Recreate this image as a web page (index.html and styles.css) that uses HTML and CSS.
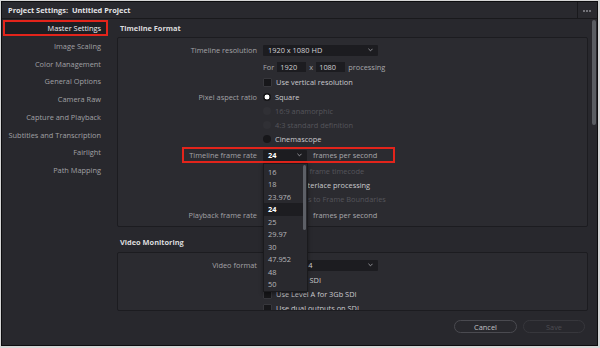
FILE: index.html
```html
<!DOCTYPE html>
<html>
<head>
<meta charset="utf-8">
<link rel="stylesheet" href="styles.css">
</head>
<body>
<div class="window">
  <div class="titlebar">
    <span class="title">Project Settings:&nbsp; Untitled Project</span>
    <div class="more"><span class="dot"></span><span class="dot"></span><span class="dot"></span></div>
  </div>
  <div class="body">
    <nav class="sidebar">
      <div class="nav-item active">Master Settings</div>
      <div class="nav-item">Image Scaling</div>
      <div class="nav-item">Color Management</div>
      <div class="nav-item">General Options</div>
      <div class="nav-item">Camera Raw</div>
      <div class="nav-item">Capture and Playback</div>
      <div class="nav-item">Subtitles and Transcription</div>
      <div class="nav-item">Fairlight</div>
      <div class="nav-item">Path Mapping</div>
    </nav>
    <main class="content">
      <section class="section">
        <h2 class="heading">Timeline Format</h2>
        <div class="box box1">
          <div class="row">
            <span class="label">Timeline resolution</span>
            <div class="select wide"><span>1920 x 1080 HD</span><svg class="chev" viewBox="0 0 6 4"><polyline points="0.5,0.5 3,3 5.5,0.5"/></svg></div>
          </div>
          <div class="row mt3">
            <span class="label"></span>
            <span class="txt">For</span>
            <span class="input">1920</span>
            <span class="txt">x</span>
            <span class="input">1080</span>
            <span class="txt">processing</span>
          </div>
          <div class="row mt1">
            <span class="label"></span>
            <span class="check"></span><span class="val">Use vertical resolution</span>
          </div>
          <div class="row mt1">
            <span class="label">Pixel aspect ratio</span>
            <span class="radio on"></span><span class="val">Square</span>
          </div>
          <div class="row">
            <span class="label"></span>
            <span class="radio dim"></span><span class="val off">16:9 anamorphic</span>
          </div>
          <div class="row">
            <span class="label"></span>
            <span class="radio dim"></span><span class="val off">4:3 standard definition</span>
          </div>
          <div class="row">
            <span class="label"></span>
            <span class="radio"></span><span class="val">Cinemascope</span>
          </div>
          <div class="row mt2 marked">
            <span class="label">Timeline frame rate</span>
            <div class="fps-wrap">
              <div class="select fps"><b>24</b><svg class="chev" viewBox="0 0 6 4"><polyline points="0.5,0.5 3,3 5.5,0.5"/></svg></div>
              <ul class="menu">
                <li>16</li>
                <li>18</li>
                <li>23.976</li>
                <li class="sel">24</li>
                <li>25</li>
                <li>29.97</li>
                <li>30</li>
                <li>47.952</li>
                <li>48</li>
                <li>50</li>
                <span class="menu-thumb"></span>
              </ul>
            </div>
            <span class="txt">frames per second</span>
            <span class="mark"></span>
          </div>
          <div class="row mt2">
            <span class="label"></span>
            <span class="check"></span><span class="val off">Use drop frame timecode</span>
          </div>
          <div class="row">
            <span class="label"></span>
            <span class="check"></span><span class="val">Enable interlace processing</span>
          </div>
          <div class="row">
            <span class="label"></span>
            <span class="check"></span><span class="val off">Snap Clips to Frame Boundaries</span>
          </div>
          <div class="row mt2">
            <span class="label">Playback frame rate</span>
            <div class="select fps"><span>24</span><svg class="chev" viewBox="0 0 6 4"><polyline points="0.5,0.5 3,3 5.5,0.5"/></svg></div>
            <span class="txt">frames per second</span>
          </div>
        </div>
      </section>
      <section class="section sec2">
        <h2 class="heading h2b">Video Monitoring</h2>
        <div class="box box2">
          <div class="row">
            <span class="label">Video format</span>
            <div class="select wide"><span>HD 1080p 24</span><svg class="chev" viewBox="0 0 6 4"><polyline points="0.5,0.5 3,3 5.5,0.5"/></svg></div>
          </div>
          <div class="row mt1">
            <span class="label"></span>
            <span class="check"></span><span class="val">Use 4:4:4 SDI</span>
          </div>
          <div class="row">
            <span class="label"></span>
            <span class="check"></span><span class="val">Use Level A for 3Gb SDI</span>
          </div>
          <div class="row">
            <span class="label"></span>
            <span class="check"></span><span class="val">Use dual outputs on SDI</span>
          </div>
        </div>
      </section>
      <div class="footer">
        <button class="btn">Cancel</button>
        <button class="btn disabled">Save</button>
      </div>
    </main>
    <div class="vscroll"><div class="vthumb"></div></div>
  </div>
</div>
</body>
</html>
```
FILE: styles.css
```css
* { box-sizing: border-box; }
html, body { margin: 0; padding: 0; }
body {
  background: #d6d6d6;
  width: 600px;
  height: 348px;
  font-family: "Open Sans", "Noto Sans", sans-serif;
  font-size: 7.4px;
  color: #a4a4a8;
}
.window {
  margin: 1px 0 0 1px;
  width: 597px;
  height: 345px;
  border: 1px solid #0d0d0f;
  background: #28282d;
  display: flex;
  flex-direction: column;
}
.titlebar {
  height: 17px;
  flex: none;
  display: flex;
  align-items: center;
  justify-content: space-between;
  background: #29292e;
  border-bottom: 1px solid #19191c;
  padding-left: 6px;
}
.title {
  font-weight: 700;
  color: #e4e4e6;
  font-size: 7.4px;
}
.more {
  width: 19px;
  height: 16px;
  align-self: stretch;
  margin: 0 1px 0 0;
  border-left: 1px solid #19191c;
  display: flex;
  align-items: center;
  justify-content: center;
  gap: 1.5px;
  padding-top: 2px;
}
.dot { width: 1.8px; height: 1.8px; background: #8a8a90; border-radius: 50%; }
.body {
  flex: 1;
  display: flex;
  min-height: 0;
}
.sidebar {
  width: 115px;
  flex: none;
  padding-top: 1px;
  padding-left: 1px;
  display: flex;
  flex-direction: column;
  gap: 1.75px;
}
.nav-item {
  width: 105px;
  height: 16px;
  line-height: 16px;
  text-align: right;
  padding-right: 7px;
  color: #a0a0a4;
  white-space: nowrap;
}
.nav-item.active {
  border: 2px solid #e3241b;
  background: #1e1e22;
  color: #f0f0f2;
  line-height: 12px;
  padding-right: 5px;
}
.content {
  width: 471px;
  flex: none;
  display: flex;
  flex-direction: column;
}
.heading {
  margin: 0;
  height: 18px;
  line-height: 18px;
  padding-left: 3px;
  font-size: 7.4px;
  font-weight: 700;
  color: #dcdcde;
}
.sec2 { margin-top: 6px; }
.h2b { height: 19px; line-height: 19px; }
.box {
  border: 1px solid #1c1c20;
  border-radius: 2px;
  background: #2b2b30;
  display: flex;
  flex-direction: column;
  padding-top: 5px;
}
.box1 { height: 190px; }
.box2 { height: 59px; overflow: hidden; }
.row {
  height: 14px;
  flex: none;
  display: flex;
  align-items: center;
  gap: 6px;
  white-space: nowrap;
}
.mt1 { margin-top: 1px; }
.mt2 { margin-top: 2px; }
.mt3 { margin-top: 3px; }
.label {
  width: 139px;
  flex: none;
  text-align: right;
  color: #a2a2a6;
}
.row .label + .check,
.row .label + .radio { margin-right: -1px; }
.txt { color: #a8a8ac; }
.row .input + .txt, .row .txt + .input { margin-left: -3px; }
.val { color: #cacace; }
.val.off { color: #55555b; }
.select {
  height: 11px;
  background: #1c1c20;
  border-radius: 1px;
  display: flex;
  align-items: center;
  justify-content: space-between;
  padding: 0 5px;
  color: #d2d2d6;
  flex: none;
}
.select.wide { width: 115px; }
.select.fps { width: 44px; }
.select b { color: #ffffff; font-weight: 700; }
.chev {
  width: 5px;
  height: 4px;
  fill: none;
  stroke: #a8a8ae;
  stroke-width: 1;
}
.input {
  width: 29px;
  height: 10px;
  line-height: 10px;
  background: #1c1c20;
  padding-left: 3px;
  color: #d0d0d4;
  flex: none;
}
.check {
  width: 9px;
  height: 9px;
  flex: none;
  background: #17171a;
  border: 1px solid #37373c;
  border-radius: 1px;
}
.radio {
  width: 8px;
  height: 8px;
  flex: none;
  border-radius: 50%;
  background: #17171a;
  margin-left: 0;
}
.radio.on {
  background: radial-gradient(circle, #ffffff 0 2.2px, #151517 2.7px);
}
.radio.dim { background: #303035; }
.row .radio + .val, .row .check + .val { margin-left: -1px; }
.marked { position: relative; }
.mark {
  position: absolute;
  left: 64px;
  top: -1px;
  width: 213px;
  height: 16px;
  border: 2px solid #e3241b;
  pointer-events: none;
}
.fps-wrap {
  position: relative;
  height: 14px;
  display: flex;
  align-items: center;
  flex: none;
}
.menu {
  position: absolute;
  left: 0;
  top: 15px;
  width: 45px;
  height: 129px;
  margin: 0;
  padding: 1.5px 0 0 0;
  list-style: none;
  background: #29292e;
  border: 1px solid #1a1a1d;
  box-shadow: 0 2px 4px rgba(0,0,0,0.4);
  z-index: 5;
}
.menu li {
  height: 12.56px;
  line-height: 12.56px;
  padding-left: 4px;
  color: #b8b8bc;
  width: 40px;
}
.menu li.sel {
  background: #1d1d21;
  color: #ffffff;
  font-weight: 700;
}
.menu-thumb {
  position: absolute;
  right: 1px;
  top: 1px;
  width: 3px;
  height: 65px;
  border-radius: 2px;
  background: #5d6067;
}
.footer {
  margin-top: 9px;
  display: flex;
  justify-content: flex-end;
  gap: 6px;
  padding-right: 3px;
}
.btn {
  height: 13px;
  width: 63px;
  padding: 0;
  border-radius: 7px;
  border: 1px solid #4a4a50;
  background: transparent;
  font-family: "Open Sans", "Noto Sans", sans-serif;
  font-size: 7.4px;
  color: #c0c0c4;
}
.btn.disabled {
  width: 62px;
  border-color: #37373c;
  color: #4c4c52;
}
.vscroll {
  flex: 1;
  padding: 1px 0 0 4px;
}
.vthumb {
  width: 3.5px;
  height: 105px;
  border-radius: 2px;
  background: #5a5d62;
}
```
